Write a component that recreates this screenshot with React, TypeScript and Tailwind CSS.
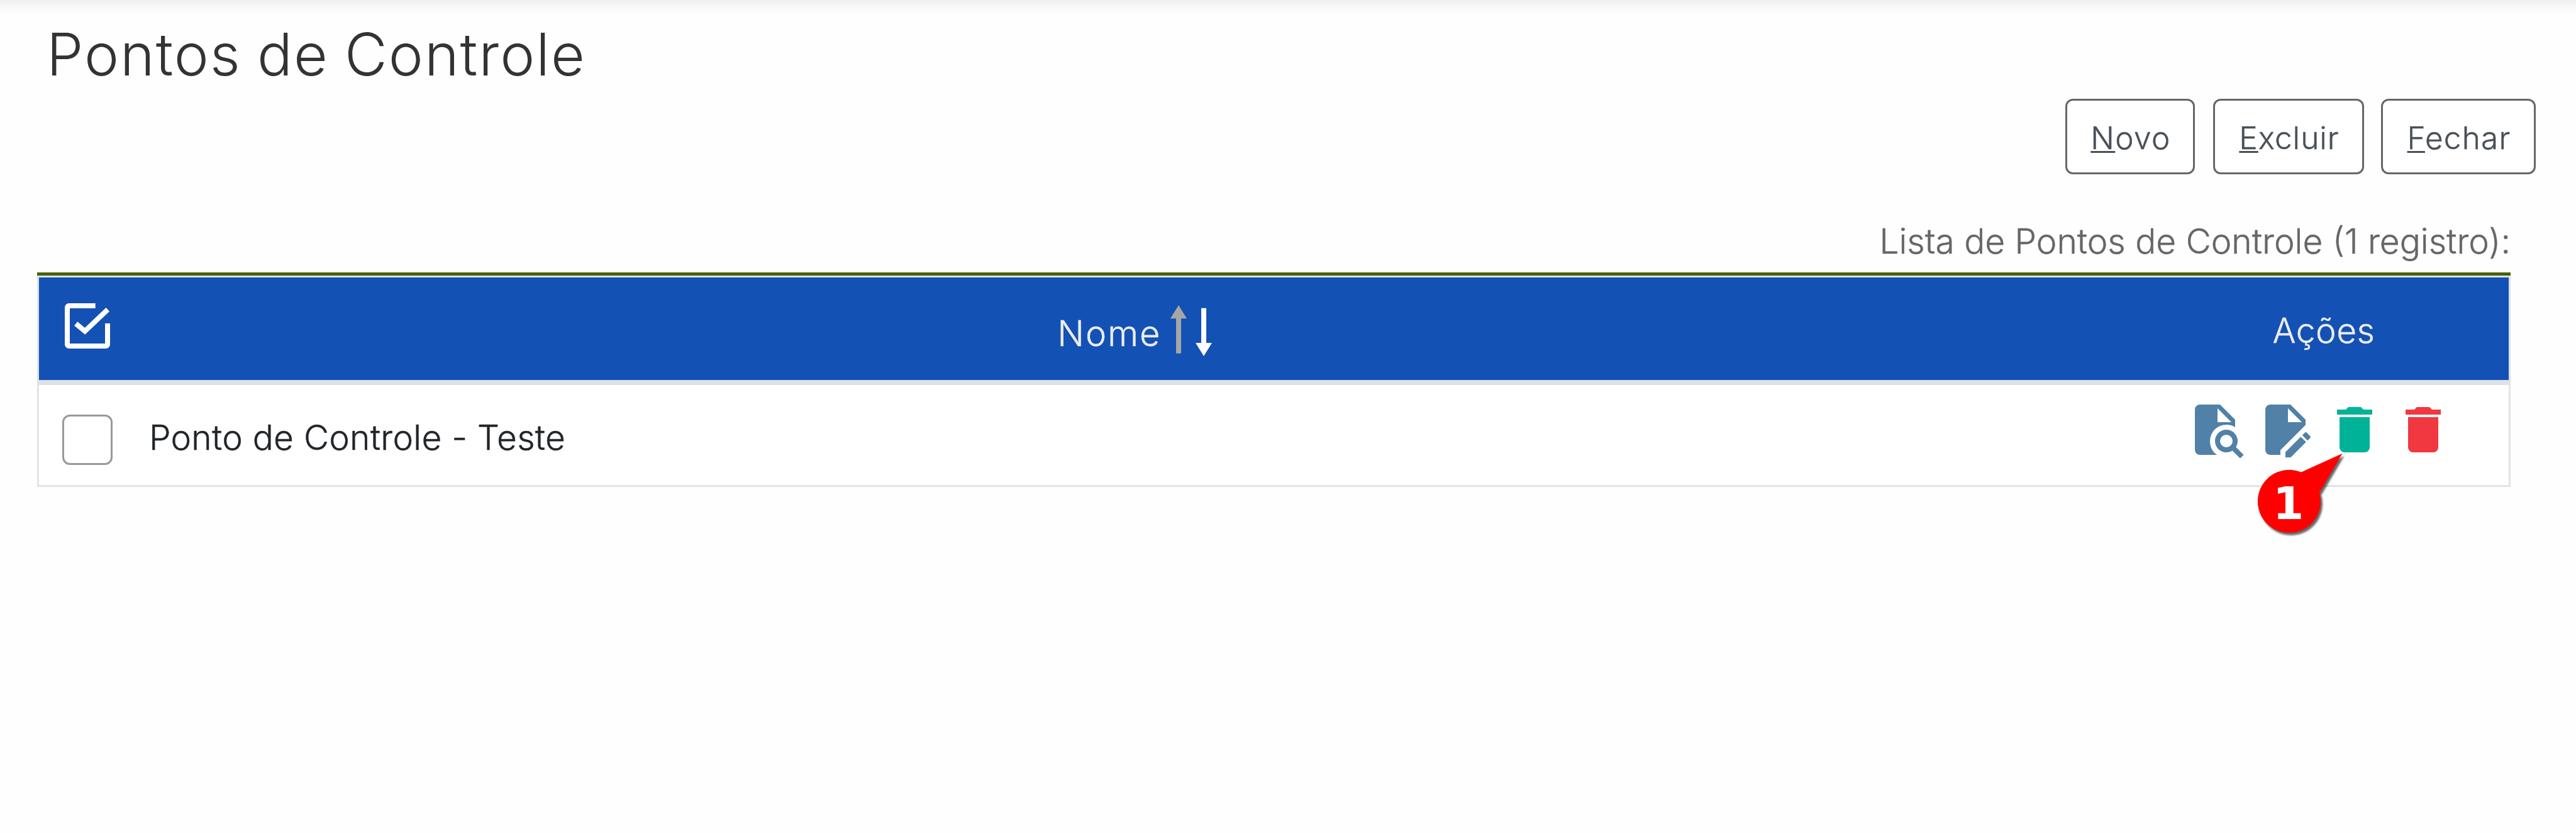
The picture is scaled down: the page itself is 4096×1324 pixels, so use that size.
import type { ReactNode } from "react";

function TopBar() {
  return <div className="h-6 bg-linear-to-b from-[#efefef] via-[#f9f9f9] to-[#fefefe]" />;
}

function ToolButton({ hotkey, rest, className }: { hotkey: string; rest: string; className: string }) {
  return (
    <button
      className={`flex h-[120px] items-center justify-center rounded-[12px] border-[3px] border-[#666666] bg-white pt-[6px] pl-[2px] text-[49.5px] leading-none text-[#495057] ${className}`}
    >
      <span>
        <span className="underline decoration-[3px] underline-offset-[3px]">{hotkey}</span>
        {rest}
      </span>
    </button>
  );
}

function CheckAllIcon() {
  return (
    <svg viewBox="148 716 120 120" className="size-20" fill="none" stroke="#ffffff" strokeWidth="12">
      <path d="M227 728H164a4 4 0 0 0-4 4V820a4 4 0 0 0 4 4H252a4 4 0 0 0 4-4V770" />
      <path d="M180.500 770.500L202 788.500L256.500 737" />
    </svg>
  );
}

function SortIcons() {
  return (
    <svg viewBox="2784 724 108 128" className="h-[85.4px] w-[72.100px]">
      <path fill="#a6a6a6" d="M2808 727L2827.500 759H2814V842H2802V759H2788.500Z" />
      <path fill="#ffffff" d="M2862 734H2874V817H2887.500L2868 848.500L2848.500 817H2862Z" />
    </svg>
  );
}

function ActionIcon({ d, className, children }: { d: string; className: string; children?: ReactNode }) {
  return (
    <div className={`relative size-[96px] ${className}`}>
      <svg viewBox="0 0 24 24" className="size-full" fill="currentColor">
        <path fillRule="evenodd" d={d} />
      </svg>
      {children}
    </div>
  );
}

const FILE_SEARCH =
  "M15.5 12C18 12 20 14 20 16.5C20 17.38 19.75 18.21 19.31 18.9L22.39 22L21 23.39L17.88 20.32C17.19 20.75 16.37 21 15.5 21C13 21 11 19 11 16.5C11 14 13 12 15.5 12M15.5 14A2.5 2.5 0 0 0 13 16.5A2.5 2.5 0 0 0 15.5 19A2.5 2.5 0 0 0 18 16.5A2.5 2.5 0 0 0 15.5 14M5 22A2 2 0 0 1 3 20V4A2 2 0 0 1 5 2H13L19 8V11C18 10.3 16.9 10 15.5 10A6.5 6.5 0 0 0 9 16.5C9 18.9 10 20.8 11.8 22H5M12 3.5V9H17.5L12 3.5Z";
const FILE_EDIT =
  "M6 2C4.9 2 4 2.9 4 4V20C4 21.1 4.9 22 6 22H10V20.1L20 10.1V8L14 2H6M13 3.5L18.5 9H13V3.5M20.1 13C20 13 19.8 13.1 19.7 13.2L18.7 14.2L20.8 16.3L21.8 15.3C22 15.1 22 14.7 21.8 14.5L20.5 13.2C20.4 13.1 20.3 13 20.1 13M18.1 14.8L12 20.9V23H14.1L20.2 16.9L18.1 14.8Z";
const TRASH =
  "M19 4H15.5L14.5 3H9.500L8.500 4H5V6H19V4M6 19A2 2 0 0 0 8 21H16A2 2 0 0 0 18 19V7H6V19Z";

function Callout() {
  return (
    <div className="absolute -left-[110.8px] top-[78.8px] z-10 h-[146.9px] w-[153.5px] drop-shadow-[3px_4px_1.5px_rgba(0,0,0,0.6)]">
      <svg viewBox="5370 1070 230 220" className="size-full">
        <circle cx="5452.300" cy="1194" r="75" fill="#ff0000" />
        <path fill="#ff0000" d="M5481 1124.500L5579 1080L5524.500 1173L5452 1194Z" />
        <text x="5450.500" y="1236" textAnchor="middle" fill="#ffffff" fontSize="106" className="font-['DejaVu_Sans'] font-bold [-webkit-text-stroke:0px]">
          1
        </text>
      </svg>
    </div>
  );
}

export default function App() {
  return (
    <div className="h-[1324px] w-[4096px] overflow-hidden bg-[#fefefe] font-['Inter',sans-serif] font-light [-webkit-text-stroke:0.4px]">
      <TopBar />
      <h1 className="mt-[12px] h-[100px] pl-[74px] text-[93px] leading-[100px] tracking-[2px] text-[#333333] [word-spacing:-3px] [-webkit-text-stroke:0px]">
        Pontos de Controle
      </h1>
      <div className="mt-[21px] flex justify-end pr-[64px]">
        <ToolButton hotkey="N" rest="ovo" className="mr-[29px] w-[206px] tracking-[1.4px]" />
        <ToolButton hotkey="E" rest="xcluir" className="mr-[27px] w-[240px] tracking-[1px]" />
        <ToolButton hotkey="F" rest="echar" className="w-[246px] tracking-[1.2px]" />
      </div>
      <p className="mt-[76px] h-[60px] pr-[104px] text-right text-[55px] leading-[60px] text-[#666666]">
        Lista de Pontos de Controle (1 registro):
      </p>
      <div className="mt-[20px] ml-[59px] w-[3933px]">
        <div className="h-[5px] bg-[#4a5f02]" />
        <div className="flex h-[174px] border-x-[3px] border-t-[3px] border-b-8 border-[#dee2e6] bg-[#1351b4] text-[55px] text-[#ececec]">
          <div className="w-[149px] pt-[37px] pl-[37px]">
            <CheckAllIcon />
          </div>
          <div className="flex flex-1 items-start justify-center pt-[42px]">
            <span className="mt-[17px] mr-[12px] text-[56px] leading-[60px] tracking-[2px]">Nome</span>
            <SortIcons />
          </div>
          <div className="w-[588px] pt-[54px] text-center leading-[60px] tracking-[0.5px]">Ações</div>
        </div>
        <div className="flex h-[162px] border-x-[3px] border-b-[3px] border-[#e3e3e3] bg-white text-[#212529]">
          <div className="w-[149px] pt-[47px] pl-[37px]">
            <div className="size-20 rounded-[12px] border-[3px] border-[#999999]" />
          </div>
          <div className="flex-1 pt-[53px] pl-[26px] text-[55px] leading-[60px] tracking-[0.25px]">
            Ponto de Controle - Teste
          </div>
          <div className="flex w-[588px] pt-[23px] pl-[77px]">
            <ActionIcon d={FILE_SEARCH} className="mr-[12px] text-[#5181a7]" />
            <ActionIcon d={FILE_EDIT} className="mr-[13.5px] text-[#5181a7]" />
            <ActionIcon d={TRASH} className="mr-[13.5px] text-[#00b398]">
              <Callout />
            </ActionIcon>
            <ActionIcon d={TRASH} className="text-[#f1373f]" />
          </div>
        </div>
      </div>
    </div>
  );
}
